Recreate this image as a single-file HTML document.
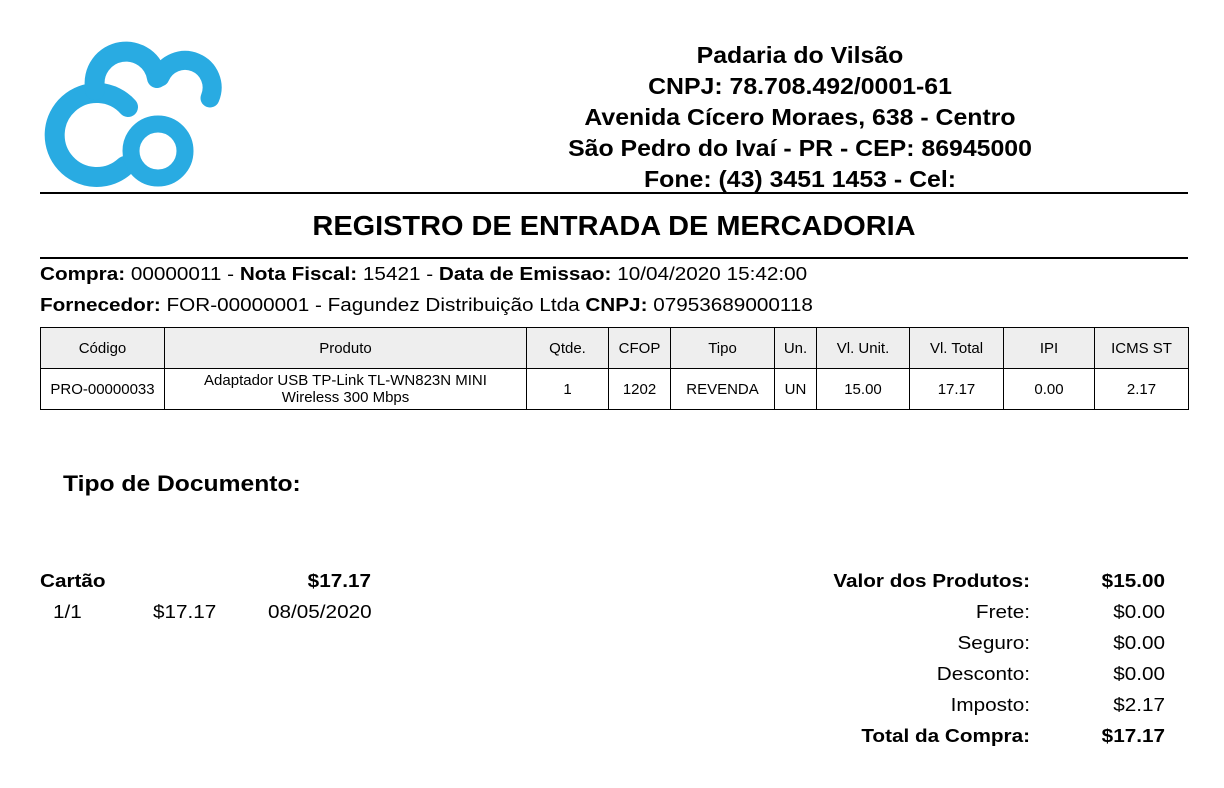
<!DOCTYPE html>
<html><head><meta charset="utf-8"><style>
body{margin:0;width:1224px;height:788px;background:#fff;font-family:"Liberation Sans",Arial,sans-serif;color:#000;position:relative;overflow:hidden}
.a{position:absolute;white-space:nowrap}
.hd{left:540px;width:520px;text-align:center;font-weight:bold;font-size:23px;transform:scaleX(1.08);transform-origin:center}
.s{transform:scaleX(1.15);transform-origin:left}
.sr{transform:scaleX(1.15);transform-origin:right}
table{position:absolute;left:40px;top:327px;border-collapse:collapse;font-size:15px}
td{border:1px solid #000;text-align:center;padding:0;line-height:17px}
tr.h td{background:#eee;height:40px}
tr.r td{height:40px}
.b{font-weight:bold}
.r{text-align:right}
</style></head><body>
<svg class="a" style="left:0;top:0" width="240" height="200">
<g fill="none" stroke="#29abe2" stroke-linecap="round">
<path d="M128,107 A42,42 0 1 0 125,166" stroke-width="20"/>
<circle cx="158" cy="151" r="27" stroke-width="17"/>
<path d="M95,90 L95,88 A31,31 0 0 1 157,78" stroke-width="20"/>
<path d="M160,77 A27,27 0 0 1 210,98" stroke-width="19"/>
</g></svg>
<div class="a hd" style="top:42px">Padaria do Vilsão</div>
<div class="a hd" style="top:73px">CNPJ: 78.708.492/0001-61</div>
<div class="a hd" style="top:104px">Avenida Cícero Moraes, 638 - Centro</div>
<div class="a hd" style="top:135px">São Pedro do Ivaí - PR - CEP: 86945000</div>
<div class="a hd" style="top:166px">Fone: (43) 3451 1453 - Cel:</div>
<div class="a" style="left:40px;top:192px;width:1148px;height:2px;background:#000"></div>
<div class="a b" style="left:0;width:1228px;text-align:center;top:210px;font-size:28px;transform:scaleX(1.033)">REGISTRO DE ENTRADA DE MERCADORIA</div>
<div class="a" style="left:40px;top:257px;width:1148px;height:2px;background:#000"></div>
<div class="a s" style="left:40px;top:264px;font-size:18px"><b>Compra:</b> 00000011 - <b>Nota Fiscal:</b> 15421 - <b>Data de Emissao:</b> 10/04/2020 15:42:00</div>
<div class="a s" style="left:40px;top:295px;font-size:18px"><b>Fornecedor:</b> FOR-00000001 - Fagundez Distribuição Ltda <b>CNPJ:</b> 07953689000118</div>
<table>
<tr class="h"><td style="width:123px">Código</td><td style="width:361px">Produto</td><td style="width:81px">Qtde.</td><td style="width:61px">CFOP</td><td style="width:103px">Tipo</td><td style="width:41px">Un.</td><td style="width:92px">Vl. Unit.</td><td style="width:93px">Vl. Total</td><td style="width:90px">IPI</td><td style="width:93px">ICMS ST</td></tr>
<tr class="r"><td>PRO-00000033</td><td>Adaptador USB TP-Link TL-WN823N MINI<br>Wireless 300 Mbps</td><td>1</td><td>1202</td><td>REVENDA</td><td>UN</td><td>15.00</td><td>17.17</td><td>0.00</td><td>2.17</td></tr>
</table>
<div class="a b s" style="left:63px;top:471px;font-size:22px;transform:scaleX(1.12)">Tipo de Documento:</div>
<div class="a b s" style="left:40px;top:571px;font-size:18px">Cartão</div>
<div class="a b r sr" style="left:270px;width:101px;top:571px;font-size:18px">$17.17</div>
<div class="a s" style="left:53px;top:602px;font-size:18px">1/1</div>
<div class="a s" style="left:153px;top:602px;font-size:18px">$17.17</div>
<div class="a s" style="left:268px;top:602px;font-size:18px">08/05/2020</div>
<div class="a r sr" style="left:730px;width:300px;top:566px;font-size:18px;line-height:31px"><b>Valor dos Produtos:</b><br>Frete:<br>Seguro:<br>Desconto:<br>Imposto:<br><b>Total da Compra:</b></div>
<div class="a r sr" style="left:1065px;width:100px;top:566px;font-size:18px;line-height:31px"><b>$15.00</b><br>$0.00<br>$0.00<br>$0.00<br>$2.17<br><b>$17.17</b></div>
</body></html>
